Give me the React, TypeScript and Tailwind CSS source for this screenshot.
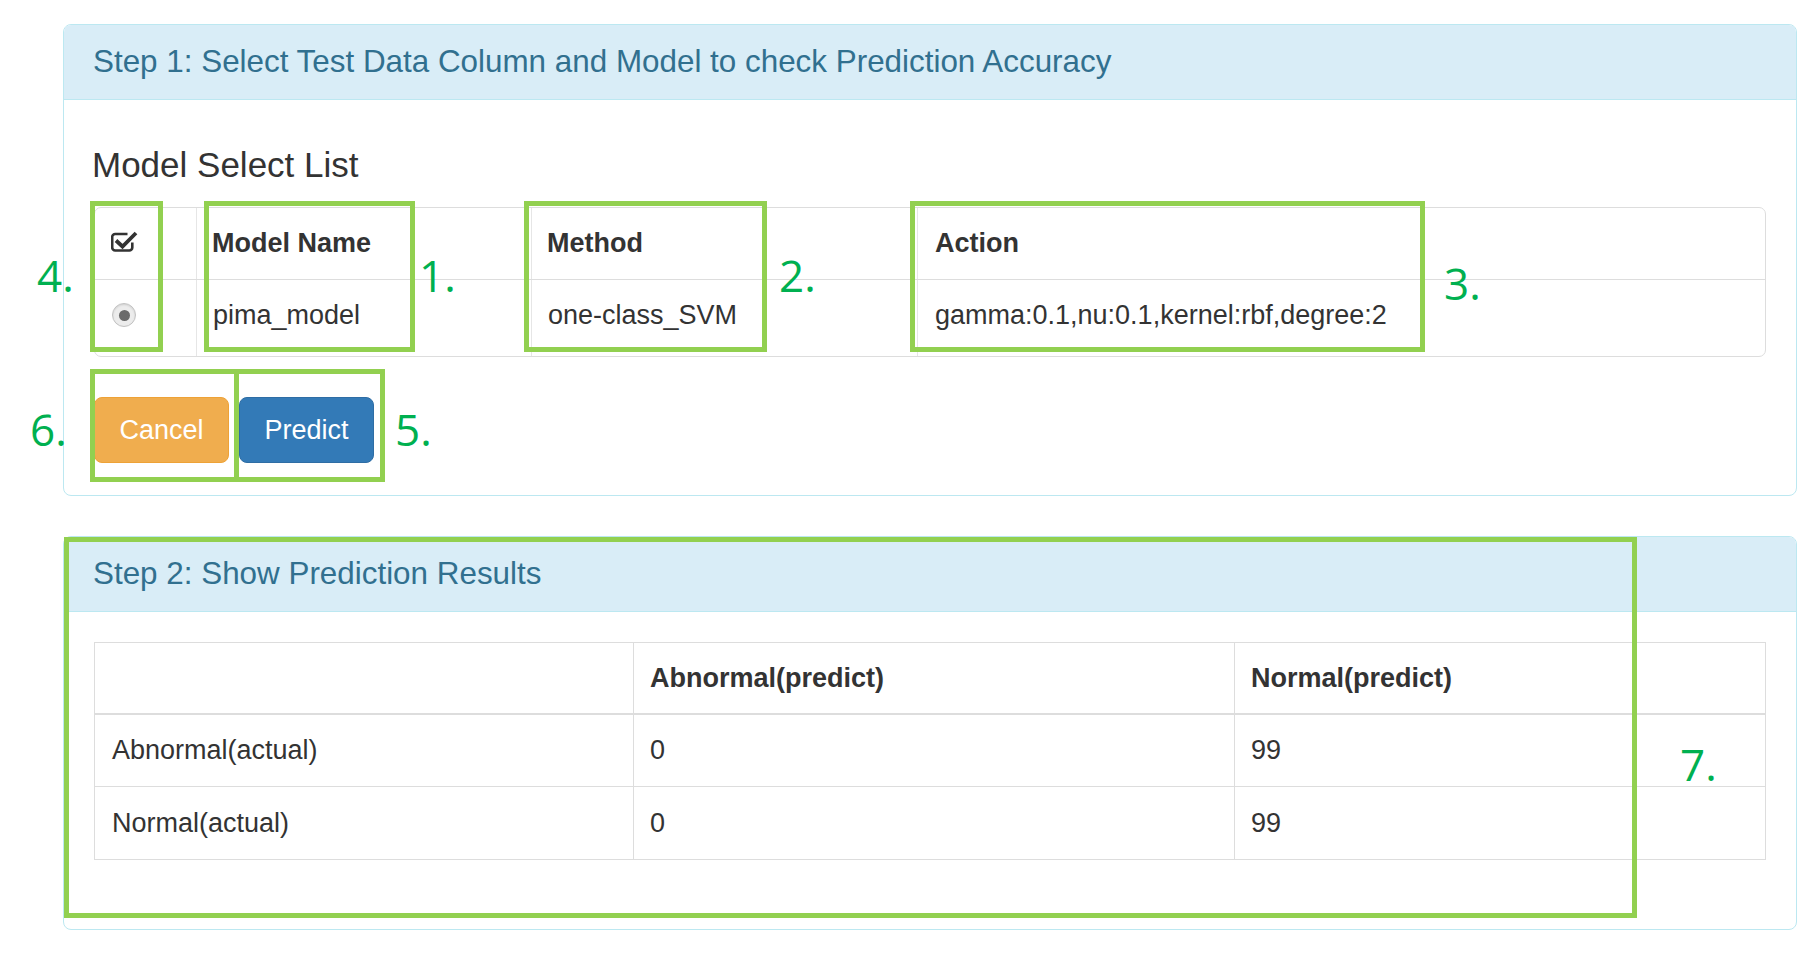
import React from "react";

const modelRows = [
  { name: "pima_model", method: "one-class_SVM", action: "gamma:0.1,nu:0.1,kernel:rbf,degree:2" },
];

const resultRows = [
  { label: "Abnormal(actual)", abnormal: "0", normal: "99" },
  { label: "Normal(actual)", abnormal: "0", normal: "99" },
];

// annotation boxes drawn over the screenshot
const boxes = [
  { id: "b4", cls: "left-[90px] top-[201px] w-[73px] h-[151px]" },
  { id: "b1", cls: "left-[204px] top-[201px] w-[211px] h-[151px]" },
  { id: "b2", cls: "left-[524px] top-[201px] w-[243px] h-[151px]" },
  { id: "b3", cls: "left-[910px] top-[201px] w-[515px] h-[151px]" },
  { id: "b6", cls: "left-[90px] top-[369px] w-[149px] h-[113px]" },
  { id: "b5", cls: "left-[234px] top-[369px] w-[151px] h-[113px]" },
  { id: "b7", cls: "left-[64px] top-[537px] w-[1573px] h-[381px]" },
];

const labels = [
  { text: "4.", cls: "left-[37px] top-[253px]" },
  { text: "1.", cls: "left-[419px] top-[253px]" },
  { text: "2.", cls: "left-[779px] top-[253px]" },
  { text: "3.", cls: "left-[1444px] top-[261px]" },
  { text: "6.", cls: "left-[30px] top-[407px]" },
  { text: "5.", cls: "left-[395px] top-[407px]" },
  { text: "7.", cls: "left-[1680px] top-[742px]" },
];

const CheckSquare = () => (
  <svg width="27" height="21" viewBox="0 0 27 21" className="mb-[5px] shrink-0">
    <path
      d="M16.5 3 H4.2 A3 3 0 0 0 1.2 6 V16.5 A3 3 0 0 0 4.2 19.5 H18.3 A3 3 0 0 0 21.3 16.5 V11.5"
      fill="none"
      stroke="#333"
      strokeWidth="2.6"
    />
    <path d="M5 9.5 L11.5 15.5 L25 2" fill="none" stroke="#333" strokeWidth="3.8" />
  </svg>
);

const Radio = () => (
  <span className="mb-[6px] flex h-[24px] w-[24px] shrink-0 items-center justify-center rounded-full border-[1.5px] border-[#c2c2c2] bg-[#ececec] shadow-[inset_0_1px_2px_rgba(0,0,0,0.12)]">
    <span className="h-[11px] w-[11px] rounded-full bg-[#6a6a6a]" />
  </span>
);

const Panel = ({ title, className, children }: { title: string; className?: string; children: React.ReactNode }) => (
  <section className={`overflow-hidden rounded-[8px] border border-[#bce8f1] bg-white ${className ?? ""}`}>
    <div className="flex h-[75px] items-center border-b border-[#bce8f1] bg-[#d9edf7] pl-[29px] text-[31.4px] text-[#31708f]">
      {title}
    </div>
    {children}
  </section>
);

export default function App() {
  return (
    <div className="relative h-[954px] w-[1820px] bg-white font-['Liberation_Sans',Arial,sans-serif] text-[#333]">
      <div className="w-[1797px] pl-[63px] pt-[24px]">
        <Panel title="Step 1: Select Test Data Column and Model to check Prediction Accuracy">
          <div className="px-[30px] pb-[32px] pt-[46px]">
            <h4 className="ml-[-2px] text-[35px] leading-[38px]">Model Select List</h4>

            <div className="mt-[23px] overflow-hidden rounded-[7px] border border-[#dddddd] text-[27px]">
              <div className="grid h-[72px] grid-cols-[102px_335px_386px_1fr] border-b border-[#dddddd] font-bold">
                <div className="flex items-center border-r border-[#e6e6e6] pl-[16px]">
                  <CheckSquare />
                </div>
                <div className="flex items-center border-r border-[#e6e6e6] pl-[15px]">Model Name</div>
                <div className="flex items-center border-r border-[#e6e6e6] pl-[15px]">Method</div>
                <div className="flex items-center pl-[17px]">Action</div>
              </div>
              {modelRows.map((row) => (
                <div key={row.name} className="grid h-[76px] grid-cols-[102px_335px_386px_1fr]">
                  <div className="flex items-center border-r border-[#e6e6e6] pl-[17px]">
                    <Radio />
                  </div>
                  <div className="flex items-center border-r border-[#e6e6e6] pb-[6px] pl-[16px]">{row.name}</div>
                  <div className="flex items-center border-r border-[#e6e6e6] pb-[6px] pl-[16px]">{row.method}</div>
                  <div className="flex items-center pb-[6px] pl-[17px]">{row.action}</div>
                </div>
              ))}
            </div>

            <div className="mt-[40px] flex gap-[10px] text-[27px] text-white">
              <button className="h-[66px] w-[135px] rounded-[8px] border border-[#eea236] bg-[#f0ad4e]">Cancel</button>
              <button className="h-[66px] w-[135px] rounded-[8px] border border-[#2e6da4] bg-[#337ab7]">Predict</button>
            </div>
          </div>
        </Panel>

        <Panel title="Step 2: Show Prediction Results" className="mt-[40px]">
          <div className="px-[30px] pb-[69px] pt-[30px]">
            <div className="border border-[#dddddd] text-[27px]">
              <div className="grid h-[72px] grid-cols-[539px_601px_1fr] border-b-2 border-[#dddddd] font-bold">
                <div className="border-r border-[#dddddd]" />
                <div className="flex items-center border-r border-[#dddddd] pl-[16px]">Abnormal(predict)</div>
                <div className="flex items-center pl-[16px]">Normal(predict)</div>
              </div>
              {resultRows.map((row, i) => (
                <div
                  key={row.label}
                  className={`grid grid-cols-[539px_601px_1fr] ${i === 0 ? "h-[72px] border-b border-[#dddddd]" : "h-[72px]"}`}
                >
                  <div className="flex items-center border-r border-[#dddddd] pl-[17px]">{row.label}</div>
                  <div className="flex items-center border-r border-[#dddddd] pl-[16px]">{row.abnormal}</div>
                  <div className="flex items-center pl-[16px]">{row.normal}</div>
                </div>
              ))}
            </div>
          </div>
        </Panel>
      </div>

      {boxes.map((b) => (
        <div key={b.id} className={`pointer-events-none absolute border-[5px] border-[#92d050] ${b.cls}`} />
      ))}
      {labels.map((l) => (
        <span
          key={l.text}
          className={`absolute font-['Open_Sans',sans-serif] text-[44px] leading-none text-[#00b050] ${l.cls}`}
        >
          {l.text}
        </span>
      ))}
    </div>
  );
}
